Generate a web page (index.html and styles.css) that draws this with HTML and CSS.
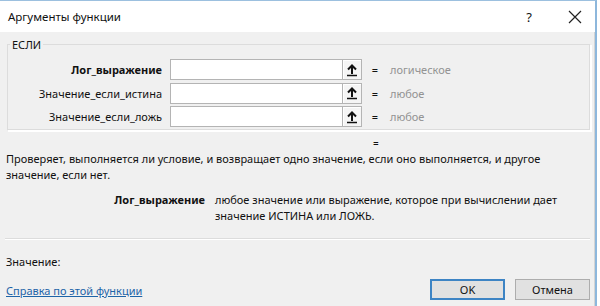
FILE: index.html
```html
<!DOCTYPE html>
<html lang="ru">
<head>
  <meta charset="UTF-8">
  <title>Аргументы функции</title>
  <link rel="stylesheet" href="styles.css">
</head>
<body>
  <div class="dialog">
    <div class="titlebar">
      <span class="title">Аргументы функции</span>
      <span class="help">?</span>
      <span class="close">
        <svg width="14" height="14" viewBox="0 0 14 14"><path d="M1 1 L13 13 M13 1 L1 13" stroke="#222" stroke-width="1.2"/></svg>
      </span>
    </div>

    <div class="client">
      <fieldset class="group">
        <legend>ЕСЛИ</legend>
        <div class="arg">
          <label class="bold">Лог_выражение</label>
          <input type="text">
          <button class="ref"><svg width="12" height="14" viewBox="0 0 12 14"><path d="M6 2.5 L6 11 M2 6.5 L6 2.5 L10 6.5" stroke="#111" stroke-width="2" fill="none"/><path d="M1 12.5 H11" stroke="#111" stroke-width="1.5"/></svg></button>
          <span class="eq">=</span>
          <span class="val">логическое</span>
        </div>
        <div class="arg">
          <label>Значение_если_истина</label>
          <input type="text">
          <button class="ref"><svg width="12" height="14" viewBox="0 0 12 14"><path d="M6 2.5 L6 11 M2 6.5 L6 2.5 L10 6.5" stroke="#111" stroke-width="2" fill="none"/><path d="M1 12.5 H11" stroke="#111" stroke-width="1.5"/></svg></button>
          <span class="eq">=</span>
          <span class="val">любое</span>
        </div>
        <div class="arg">
          <label>Значение_если_ложь</label>
          <input type="text">
          <button class="ref"><svg width="12" height="14" viewBox="0 0 12 14"><path d="M6 2.5 L6 11 M2 6.5 L6 2.5 L10 6.5" stroke="#111" stroke-width="2" fill="none"/><path d="M1 12.5 H11" stroke="#111" stroke-width="1.5"/></svg></button>
          <span class="eq">=</span>
          <span class="val">любое</span>
        </div>
      </fieldset>

      <div class="result">=</div>

      <p class="desc">Проверяет, выполняется ли условие, и возвращает одно значение, если оно выполняется, и другое<br>значение, если нет.</p>

      <div class="argdesc">
        <span class="name">Лог_выражение</span>
        <span class="text">любое значение или выражение, которое при вычислении дает<br>значение ИСТИНА или ЛОЖЬ.</span>
      </div>

      <div class="footer">
        <div class="value">Значение:</div>
        <div class="bottom">
          <a href="#" class="helplink">Справка по этой функции</a>
          <div class="buttons">
            <button class="btn default">OK</button>
            <button class="btn">Отмена</button>
          </div>
        </div>
      </div>
    </div>
  </div>
</body>
</html>
```

FILE: styles.css
```css
body {
  margin: 0;
  background: #fff;
  font-family: "Noto Sans", "Open Sans", sans-serif;
  font-size: 11px;
  color: #111;
}
.dialog {
  width: 597px;
  height: 306px;
  box-sizing: border-box;
  border-top: 1px solid #9cc0df;
  border-right: 2px solid #8db7dc;
  display: flex;
  flex-direction: column;
}
.titlebar {
  height: 31px;
  background: #fff;
  display: flex;
  align-items: center;
  padding: 0 0 0 8px;
  font-size: 11.5px;
}
.title { flex: 1; }
.help {
  font-size: 13px;
  width: 44px;
  margin-right: 4px;
  text-align: center;
}
.close {
  width: 40px;
  display: flex;
  justify-content: center;
}
.client {
  flex: 1;
  background: #f0f0f0;
  border-right: 1px solid #d4d4d4;
  display: flex;
  flex-direction: column;
}
.group {
  margin: 5px 3px 0 7px;
  padding: 7px 0 0 0;
  border: 1px solid #dcdcdc;
  border-right-color: #fff;
  border-bottom-color: #fff;
  box-shadow: inset -1px -1px 0 #dcdcdc, 1px 1px 0 #fff;
}
.group legend {
  padding: 0 2px;
  margin-left: 2px;
  font-size: 11px;
}
.arg {
  display: grid;
  grid-template-columns: 162px 172px 20px 26px 1fr;
  align-items: center;
  height: 21px;
  margin-bottom: 2.5px;
}
.arg label {
  text-align: right;
  padding-right: 8px;
}
.arg label.bold { font-weight: bold; }
.arg input {
  height: 21px;
  box-sizing: border-box;
  border: 1px solid #b4b4b4;
  border-right: none;
  background: #fff;
  padding: 0;
}
.ref {
  width: 20px;
  height: 21px;
  padding: 0;
  border: 1px solid #b4b4b4;
  background: #f5f5f5;
  box-shadow: inset 1px 1px 0 #fff;
  display: flex;
  align-items: center;
  justify-content: center;
}
.eq { text-align: center; }
.val {
  color: #939393;
  padding-left: 2px;
}
.result {
  margin: 7px 0 0 373px;
  height: 11px;
  line-height: 11px;
  font-size: 10px;
}
.desc {
  margin: 2px 0 0 6px;
  line-height: 16px;
  white-space: nowrap;
}
.argdesc {
  display: flex;
  margin-top: 9px;
  line-height: 16px;
}
.argdesc .name {
  width: 205px;
  text-align: right;
  font-weight: bold;
  flex-shrink: 0;
}
.argdesc .text {
  margin-left: 10px;
  white-space: nowrap;
}
.footer {
  margin-top: auto;
  border-top: 1px solid #dcdcdc;
  box-shadow: inset 0 1px 0 #fff;
  margin-left: 5px;
  margin-right: 4px;
  padding-bottom: 6px;
}
.value {
  margin: 16px 0 0 1px;
  line-height: 14px;
}
.bottom {
  display: flex;
  align-items: flex-end;
  justify-content: space-between;
  margin-top: 10px;
}
.helplink {
  color: #1e64a8;
  margin-left: 1px;
  margin-bottom: 2px;
}
.buttons {
  display: flex;
  gap: 10px;
}
.btn {
  width: 75px;
  height: 21px;
  font-family: inherit;
  font-size: 11px;
  background: #e1e1e1;
  border: 1px solid #adadad;
  padding: 0;
  color: #111;
}
.btn.default {
  border: 2px solid #3d84c4;
}
```
